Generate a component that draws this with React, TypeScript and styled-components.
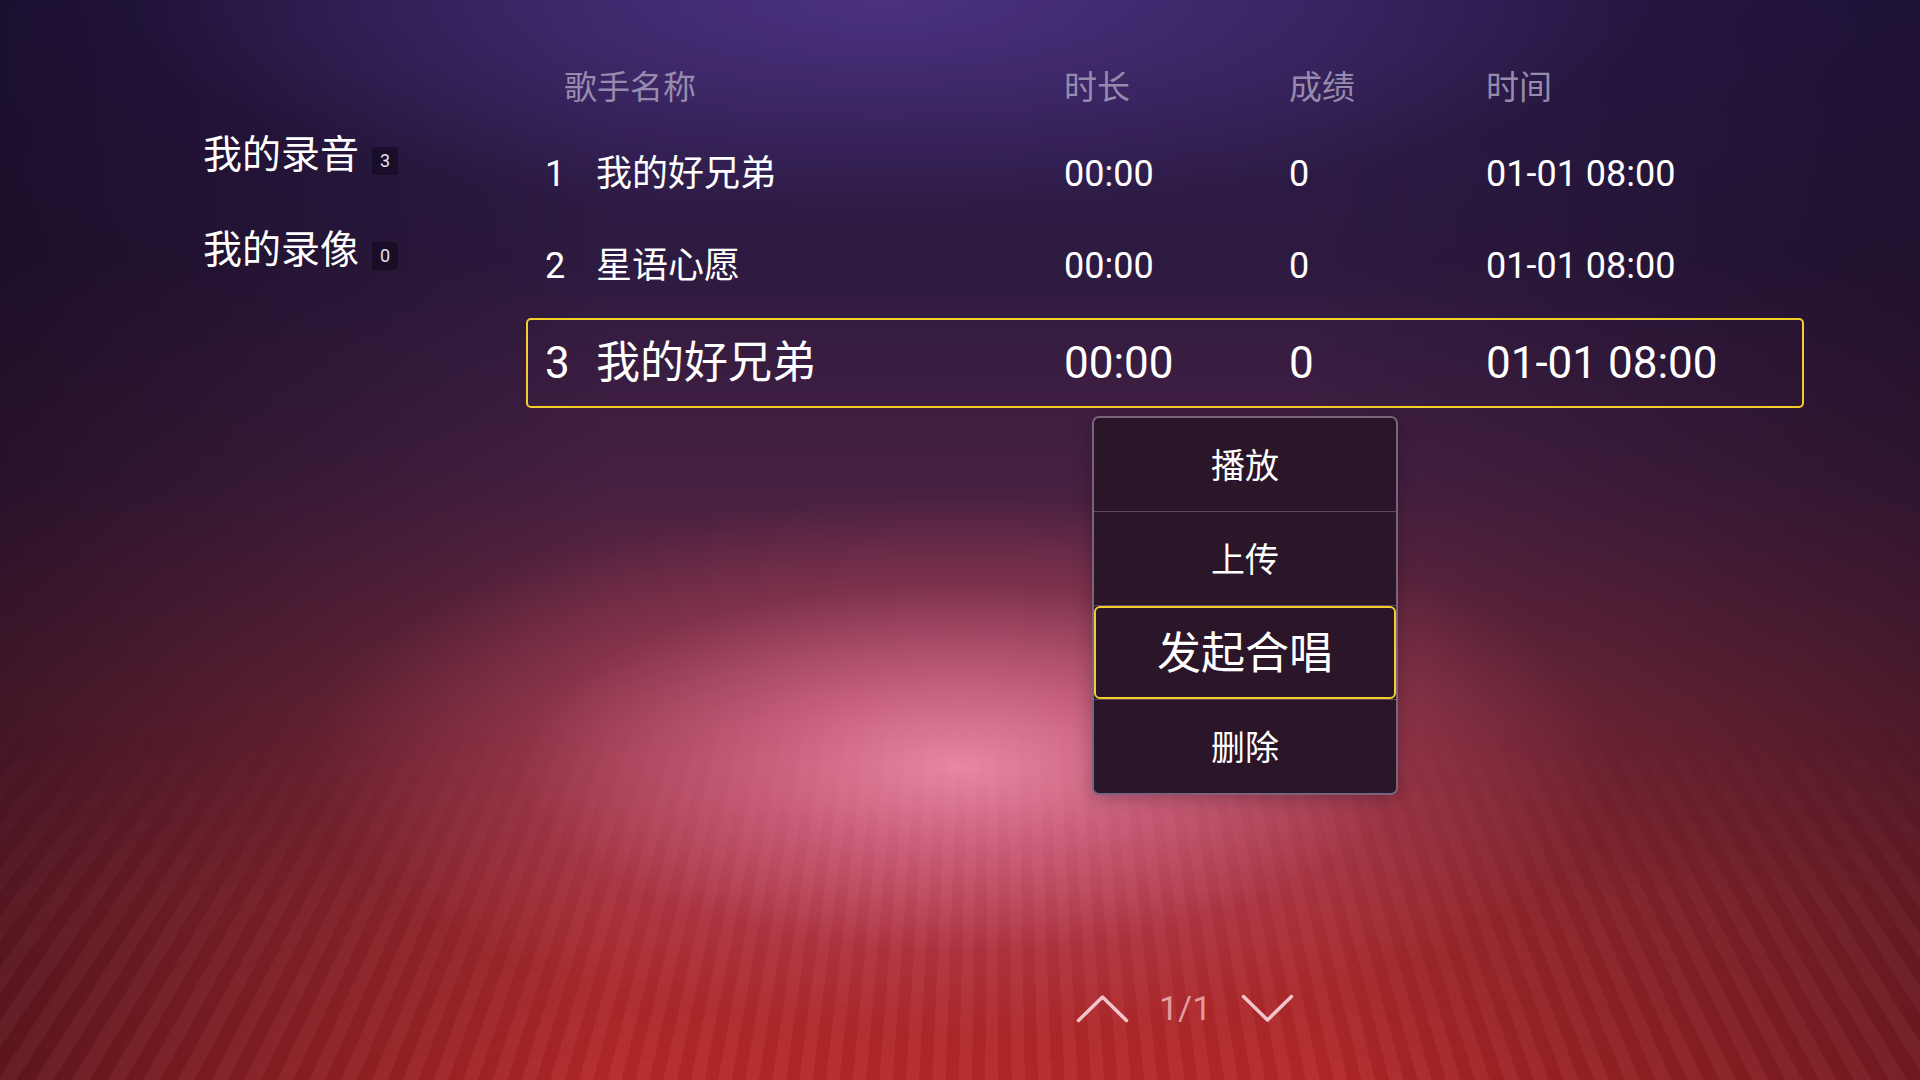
import React from "react";
import styled, { createGlobalStyle } from "styled-components";

const Global = createGlobalStyle`
  html, body { margin: 0; padding: 0; width: 100%; height: 100%; overflow: hidden; }
  body {
    font-family: Roboto, "Noto Sans CJK SC", "Noto Sans", sans-serif;
    background: #1a0f2a;
    -webkit-font-smoothing: antialiased;
  }
  #root { width: 100%; height: 100%; }
`;

const Screen = styled.div`
  position: relative;
  width: 1920px;
  height: 1080px;
  overflow: hidden;
  display: flex;
  color: #ffffff;
  background:
    radial-gradient(ellipse 34% 25% at 50% 71%, rgba(236, 138, 168, 0.97) 0%, rgba(224, 112, 146, 0.72) 32%, rgba(196, 78, 108, 0.3) 68%, rgba(180, 60, 90, 0) 100%),
    radial-gradient(ellipse 40% 20% at 46% 0%, rgba(88, 60, 150, 0.7) 0%, rgba(80, 50, 140, 0) 100%),
    linear-gradient(to right, rgba(12, 4, 20, 0.5) 0%, rgba(12, 4, 20, 0) 32%, rgba(12, 4, 20, 0) 68%, rgba(12, 4, 20, 0.4) 100%),
    linear-gradient(to bottom, #2b1b4e 0%, #2d1a40 24%, #452042 44%, #72283a 64%, #a22a2e 84%, #b62828 100%);

  &::before {
    content: "";
    position: absolute;
    inset: 0;
    pointer-events: none;
    background: repeating-conic-gradient(
      from 0deg at 52% -40%,
      rgba(255, 255, 255, 0.04) 0deg 0.5deg,
      rgba(0, 0, 0, 0.03) 0.5deg 1deg
    );
    -webkit-mask-image: linear-gradient(to bottom, transparent 66%, rgba(0, 0, 0, 0.55) 82%, #000 100%);
    mask-image: linear-gradient(to bottom, transparent 66%, rgba(0, 0, 0, 0.55) 82%, #000 100%);
  }
`;

const Sidebar = styled.nav`
  position: relative;
  z-index: 1;
  width: 526px;
  flex-shrink: 0;
  box-sizing: border-box;
  padding: 135px 0 0 203px;
  display: flex;
  flex-direction: column;
  gap: 55px;
`;

const NavItem = styled.div`
  display: flex;
  align-items: flex-end;
  gap: 13px;
  height: 40px;
  font-size: 39px;
  line-height: 40px;
  color: #ffffff;
  white-space: nowrap;
`;

const Badge = styled.span`
  width: 26px;
  height: 28px;
  display: flex;
  align-items: center;
  justify-content: center;
  background: rgba(12, 6, 22, 0.5);
  border-radius: 3px;
  font-size: 18px;
  line-height: 1;
  color: #e6e2ec;
`;

const Main = styled.main`
  position: relative;
  z-index: 1;
  width: 1278px;
  flex-shrink: 0;
  box-sizing: border-box;
  padding: 51px 0 52px;
  display: flex;
  flex-direction: column;
`;

const columns = "51px 468px 225px 197px 1fr";

const HeaderRow = styled.div`
  display: grid;
  grid-template-columns: ${columns};
  align-items: center;
  box-sizing: border-box;
  height: 68px;
  margin-bottom: 9px;
  padding-left: 19px;
  font-size: 33px;
  color: #978bad;
  white-space: nowrap;
`;

const HeaderName = styled.span`
  grid-column: span 2;
  padding-left: 19px;
`;

const DataRow = styled.div<{ $selected?: boolean }>`
  display: grid;
  grid-template-columns: ${columns};
  align-items: center;
  box-sizing: border-box;
  height: ${(p) => (p.$selected ? 90 : 92)}px;
  margin-top: ${(p) => (p.$selected ? 6 : 0)}px;
  padding-left: 17px;
  border: 2px solid ${(p) => (p.$selected ? "#f3cf2b" : "transparent")};
  border-radius: 5px;
  font-size: ${(p) => (p.$selected ? 44 : 36)}px;
  line-height: 1;
  color: #ffffff;
  white-space: nowrap;
`;

const Cell = styled.span``;

const Menu = styled.div`
  position: absolute;
  left: 566px;
  top: 416px;
  width: 306px;
  box-sizing: border-box;
  display: flex;
  flex-direction: column;
  background: #2b1528;
  border: 2px solid rgba(185, 165, 195, 0.55);
  border-radius: 7px;
  overflow: hidden;
  box-shadow: 0 4px 18px rgba(10, 0, 15, 0.25);
`;

const MenuItem = styled.div<{ $active?: boolean }>`
  height: 93px;
  box-sizing: border-box;
  display: flex;
  align-items: center;
  justify-content: center;
  padding-top: 2px;
  font-size: ${(p) => (p.$active ? 44 : 34)}px;
  line-height: 1;
  color: #ffffff;
  border: 2px solid ${(p) => (p.$active ? "#f2cd2c" : "transparent")};
  border-radius: ${(p) => (p.$active ? 6 : 0)}px;
`;

const MenuDivider = styled.div`
  height: 1px;
  background: rgba(200, 180, 210, 0.32);
`;

const Pager = styled.div`
  margin-top: auto;
  display: flex;
  align-items: center;
  height: 40px;
  padding-left: 550px;
`;

const PageText = styled.span`
  font-size: 34px;
  line-height: 1;
  color: rgba(255, 215, 222, 0.66);
  margin: 0 30px 0 30px;
`;

const Chevron = ({ up }: { up?: boolean }) => (
  <svg width="53" height="29" viewBox="0 0 53 29" fill="none">
    <polyline
      points={up ? "2.5,26.5 26.5,3 50.5,26.5" : "2.5,2.5 26.5,26 50.5,2.5"}
      stroke="rgba(255,232,238,0.82)"
      strokeWidth="3.5"
      strokeLinecap="round"
      strokeLinejoin="round"
    />
  </svg>
);

const rows = [
  { no: 1, name: "我的好兄弟", dur: "00:00", score: "0", time: "01-01 08:00" },
  { no: 2, name: "星语心愿", dur: "00:00", score: "0", time: "01-01 08:00" },
  { no: 3, name: "我的好兄弟", dur: "00:00", score: "0", time: "01-01 08:00" },
];

const menuItems = ["播放", "上传", "发起合唱", "删除"];

export default function App() {
  return (
    <>
      <Global />
      <Screen>
        <Sidebar>
          <NavItem>
            我的录音<Badge>3</Badge>
          </NavItem>
          <NavItem>
            我的录像<Badge>0</Badge>
          </NavItem>
        </Sidebar>
        <Main>
          <HeaderRow>
            <HeaderName>歌手名称</HeaderName>
            <Cell>时长</Cell>
            <Cell>成绩</Cell>
            <Cell>时间</Cell>
          </HeaderRow>
          {rows.map((r) => (
            <DataRow key={r.no} $selected={r.no === 3}>
              <Cell>{r.no}</Cell>
              <Cell>{r.name}</Cell>
              <Cell>{r.dur}</Cell>
              <Cell>{r.score}</Cell>
              <Cell>{r.time}</Cell>
            </DataRow>
          ))}
          <Menu>
            {menuItems.map((m, i) => (
              <React.Fragment key={m}>
                {i > 0 && <MenuDivider />}
                <MenuItem $active={i === 2}>{m}</MenuItem>
              </React.Fragment>
            ))}
          </Menu>
          <Pager>
            <Chevron up />
            <PageText>1/1</PageText>
            <Chevron />
          </Pager>
        </Main>
      </Screen>
    </>
  );
}
